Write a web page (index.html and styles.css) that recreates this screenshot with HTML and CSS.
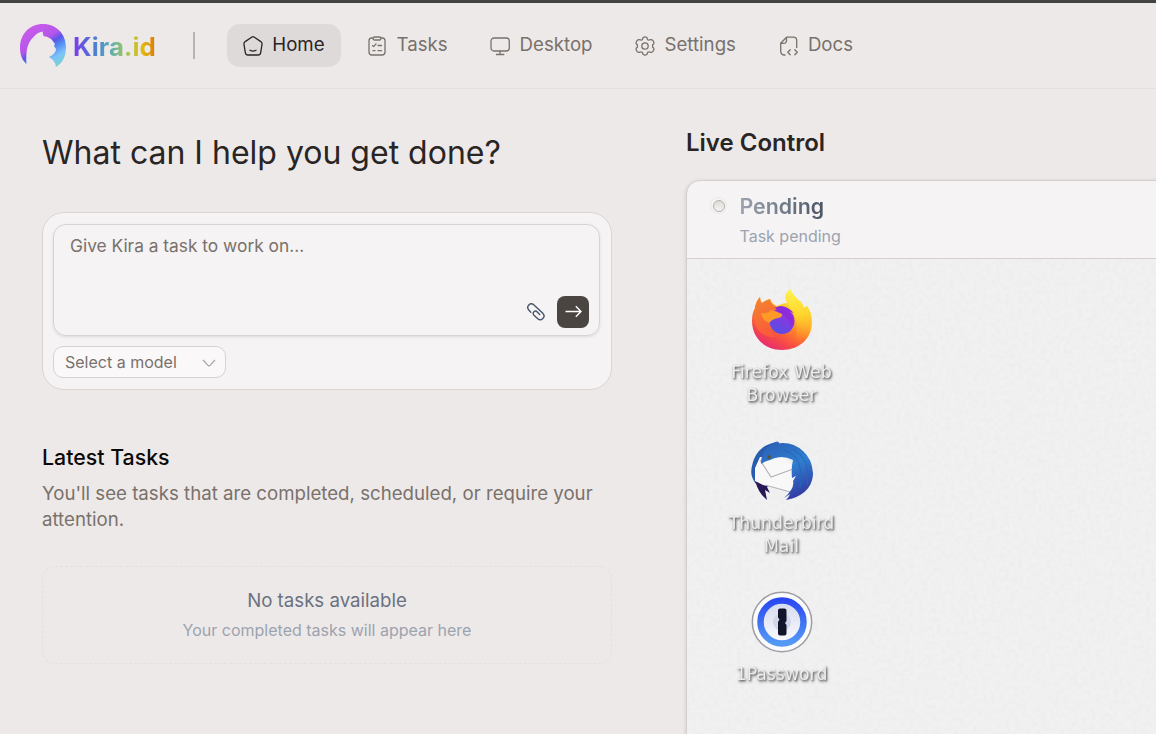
FILE: index.html
```html
<!DOCTYPE html>
<html lang="en">
<head>
<meta charset="utf-8">
<title>Kira.id</title>
<link rel="stylesheet" href="styles.css">
</head>
<body>
<header class="header">
  <div class="brand">
    <svg class="brand-mark" viewBox="0 0 46 44">
      <defs>
        <linearGradient id="mark" x1="0.25" y1="0.1" x2="0.85" y2="1">
          <stop offset="0" stop-color="#c75bea"/><stop offset=".34" stop-color="#b557ea"/>
          <stop offset=".47" stop-color="#5a56e8"/><stop offset=".6" stop-color="#548df3"/>
          <stop offset=".78" stop-color="#7cc2fa"/><stop offset="1" stop-color="#79d2cc"/>
        </linearGradient>
      </defs>
      <path fill="url(#mark)" d="M6.500 40C2 36 0 30.500 0 24C0 10 9.500 0 23 0C36.500 0 46 10 46 23.500C46 33 42 39.500 36 43C35.500 38 32.500 35 29 33C33 31.500 36 28 36 25L34 22L35 20C31 14 29 13 23.500 12L22.500 7.500C19 8 16 10 14 12.500C8 18 5.500 25 6.500 40Z"/>
    </svg>
    <span class="brand-name">Kira.id</span>
  </div>
  <div class="divider"></div>
  <nav class="nav">
    <a class="nav-item active">
      <svg class="icon" viewBox="0 0 20 20"><path d="M8.600 1.200Q10 .2 11.400 1.200L17.800 5.600Q19.300 6.700 19 8.400L17.700 16.600Q17.300 19 15 19H5Q2.700 19 2.300 16.600L1 8.400Q.7 6.700 2.200 5.600Z"/><path d="M7 14.200Q10 16 13 14.200"/></svg>
      <span>Home</span></a>
    <a class="nav-item">
      <svg class="icon" viewBox="0 0 20 20"><path d="M6 2H4.500Q2 2 2 4.500V16Q2 19 5 19H15Q18 19 18 16V4.500Q18 2 15.500 2H14"/><rect x="6" y="1" width="8" height="3" rx="1.500"/><path d="M5.500 9.600L6.600 10.600L9 7.800M11 9.500H14.500M6 14.700H8M11 14.700H14.500"/></svg>
      <span>Tasks</span></a>
    <a class="nav-item">
      <svg class="icon" viewBox="0 0 20 20"><rect x="1" y="2" width="18.300" height="13" rx="3"/><path d="M10 15V18.500M6.500 18.500H13.800"/></svg>
      <span>Desktop</span></a>
    <a class="nav-item">
      <svg class="icon" viewBox="0 0 20 20"><circle cx="10" cy="10" r="3.200"/><path d="M8 1.700Q10 .2 12 1.700L12.700 3.700Q13.700 4.400 15.500 3.700Q17 3.500 18 4.700L19 6.500Q19 8 17.600 8.900V11.100Q19 12 19 13.500L18 15.300Q17 16.500 15.500 16.300Q13.700 15.600 12.700 16.300L12 18.300Q10 19.800 8 18.300L7.300 16.300Q6.300 15.600 4.500 16.300Q3 16.500 2 15.300L1 13.500Q1 12 2.400 11.100V8.900Q1 8 1 6.500L2 4.700Q3 3.500 4.500 3.700Q6.300 4.400 7.300 3.700Z"/></svg>
      <span>Settings</span></a>
    <a class="nav-item">
      <svg class="icon" viewBox="0 0 20 20"><path d="M6 19H5Q1.700 18.500 1.700 15V7.300L7.500 1.200H14.500Q17.700 1.200 17.700 4.500V11.500M1.700 7.300H4.700Q7.500 7.300 7.500 4.500V1.200M11.200 13.700L8.800 16.200L11.200 18.700M15.800 13.700L18.300 16.200L15.800 18.700"/></svg>
      <span>Docs</span></a>
  </nav>
</header>
<main class="main">
  <section class="left">
    <h1 class="title">What can I help you get done?</h1>
    <div class="composer">
      <div class="prompt">
        <span class="placeholder">Give Kira a task to work on...</span>
        <div class="actions">
          <svg class="clip" viewBox="0 0 20 20"><path d="M4.800 10.200L3 8.200C-.5 4.500 4.300-.1 8 3L16.800 11.300C20.300 15 15.200 20 11.500 16.600L8 13.200C5.700 10.700 9 7.700 11.300 10L13.700 12.400"/></svg>
          <button class="send"><svg viewBox="0 0 20 20"><path d="M2.500 9.500H18M12.800 4.300L18 9.500L12.800 14.700"/></svg></button>
        </div>
      </div>
      <div class="select"><span>Select a model</span><svg viewBox="0 0 14 8"><path d="M1 1L5.700 6.200Q7 7.500 8.300 6.200L13 1"/></svg></div>
    </div>
    <h2 class="latest">Latest Tasks</h2>
    <p class="latest-text">You'll see tasks that are completed, scheduled, or require your attention.</p>
    <div class="empty">
      <div class="empty-title">No tasks available</div>
      <div class="empty-text">Your completed tasks will appear here</div>
    </div>
  </section>
  <section class="right">
    <h2 class="live">Live Control</h2>
    <div class="panel">
      <div class="status">
        <span class="dot"></span>
        <div><div class="status-title">Pending</div><div class="status-text">Task pending</div></div>
      </div>
      <div class="screen">
        <svg class="grain"><filter id="paper"><feTurbulence type="fractalNoise" baseFrequency=".22" numOctaves="3" seed="4"/><feColorMatrix values="0 0 0 0 .45  0 0 0 0 .45  0 0 0 0 .46  .14 0 0 0 -.05"/></filter><rect width="100%" height="100%" filter="url(#paper)"/></svg>
        <div class="apps">
          <div class="app">
            <svg class="app-icon" viewBox="0 0 62 62">
              <defs>
                <linearGradient id="fox" x1=".8" y1=".1" x2=".3" y2="1"><stop offset="0" stop-color="#fff044"/><stop offset=".3" stop-color="#ffc928"/><stop offset=".55" stop-color="#ff8029"/><stop offset=".8" stop-color="#f64749"/><stop offset="1" stop-color="#e62a75"/></linearGradient>
                <linearGradient id="globe" x1=".8" y1="0" x2=".3" y2="1"><stop offset="0" stop-color="#a62ade"/><stop offset="1" stop-color="#5350e5"/></linearGradient>
                <linearGradient id="flame" x1=".3" y1="0" x2=".4" y2="1"><stop offset="0" stop-color="#fff34c"/><stop offset=".5" stop-color="#ffd52d"/><stop offset="1" stop-color="#ff8a2b" stop-opacity="0"/></linearGradient>
                <linearGradient id="cheek" x1="0" y1="0" x2=".2" y2="1"><stop offset="0" stop-color="#f3862d"/><stop offset="1" stop-color="#fb5b3b"/></linearGradient>
              </defs>
              <path fill="url(#fox)" d="M4 19Q5 12 9 8Q9 12 11 14Q15 11 19 10Q21 15 26 17Q32 14 36 14Q32 6 39 0Q43 8 50 13Q52 16 53 19L56 17Q61 24 61 33C61 50 48 61 31 61C14 61 1 49 1 32Q1 24 4 19Z"/>
              <path fill="url(#flame)" d="M39 0Q43 8 50 13Q52 16 53 19L56 17Q61 24 60 34Q57 49 44 54Q49 34 40 20Q32 9 39 0Z"/>
              <path fill="url(#cheek)" d="M4 19Q5 12 9 8Q9 12 11 14Q15 11 19 10Q20 16 26 18L18 37Q20 44 24 48Q12 48 6 40Q1 30 4 19Z"/>
              <ellipse cx="31" cy="32" rx="12.500" ry="13" fill="url(#globe)"/>
              <path fill="#8c2bdc" d="M24 19Q32 13 43 24L37 22Q46 31 40 39Q38 26 29 24Z"/>
              <path fill="#ff9a28" d="M10 24Q16 25 20 21Q25 22 31 25Q32 28 27 29Q21 30 18 34Q11 31 10 24Z"/>
            </svg>
            <span class="app-name">Firefox Web<br>Browser</span>
          </div>
          <div class="app">
            <svg class="app-icon" viewBox="0 0 62 62">
              <defs><linearGradient id="bird" x1=".3" y1="0" x2=".7" y2="1"><stop offset="0" stop-color="#2c62b8"/><stop offset=".45" stop-color="#2f7fd0"/><stop offset="1" stop-color="#3336a0"/></linearGradient></defs>
              <path fill="#285cae" d="M5 44C-1 36 0 30 1 26C4 11 14 3 28 2L25 21L14 34Z"/>
              <path fill="#271754" d="M4 40Q12 42 19 45L16 47L19 53L14 50L16 60Q7 53 4 40Z"/>
              <path fill="#f8f8f9" d="M9 17L34 18L46 31L44 53L12 45L4 41V28Z"/>
              <path d="M9 20L20 37L45 28M14 45L43 53" fill="none" stroke="#b4b4b8" stroke-width="1.200"/>
              <path fill="url(#bird)" d="M10 24Q10 7 27 1L24 4Q40 0 52 11Q61 19 62 33C62 46 53 57 35 60Q38 57 39 54L33 58Q44 48 42 41L45 36L41 38Q40 28 42 20Q30 14 19 20Q14 21 10 24Z"/>
              <circle cx="18" cy="17" r="1.700" fill="#60501f"/>
              <path d="M32 10Q54 15 49 48M42 9Q61 20 56 45" fill="none" stroke="#2466b7" stroke-width="1"/>
            </svg>
            <span class="app-name">Thunderbird<br>Mail</span>
          </div>
          <div class="app">
            <svg class="app-icon" viewBox="0 0 62 62">
              <defs><linearGradient id="ring" x2="0" y2="1"><stop offset="0" stop-color="#2b49f2"/><stop offset="1" stop-color="#549af5"/></linearGradient><linearGradient id="face" x2="0" y2="1"><stop offset="0" stop-color="#d5d9ee"/><stop offset="1" stop-color="#fbfbff"/></linearGradient></defs>
              <circle cx="31" cy="31" r="29.700" fill="#fbfbfc" stroke="#9b9da4" stroke-width="1.500"/>
              <circle cx="31" cy="31" r="21.500" fill="url(#face)" stroke="url(#ring)" stroke-width="6.500"/>
              <circle cx="31" cy="31" r="9" fill="#d3d7ea"/>
              <path fill="#11162b" d="M29 17.500H33.500Q35.500 17.500 35.500 19.500V30L34 32L35.500 34V42.500Q35.500 44.500 33.500 44.500H29Q27 44.500 27 42.500V31L28.500 28.500L27 26.500V19.500Q27 17.500 29 17.500Z"/>
            </svg>
            <span class="app-name">1Password</span>
          </div>
        </div>
      </div>
    </div>
  </section>
</main>
</body>
</html>
```
FILE: styles.css
```css
* { box-sizing: border-box; }
body { margin: 0; height: 734px; overflow: hidden; background: #ede9e8; font-family: Inter, sans-serif; color: #292524; border-top: 3px solid #444343; }
h1, h2, p { margin: 0; }
svg { display: block; flex: none; }
.header { height: 86px; border-bottom: 1px solid #e5e1e0; display: flex; align-items: center; padding-left: 20px; }
.brand { display: flex; align-items: center; gap: 7px; width: 173px; }
.brand-mark { width: 46px; height: 44px; margin-top: 1px; }
.brand-name { font-size: 25.8px; line-height: 36px; font-weight: 650; margin-top: 3px; background: linear-gradient(90deg, #7c3aed, #4e7bd0 25%, #55a9bc 43%, #a9c952 66%, #e4b90e 84%, #d97706); background-clip: text; -webkit-background-clip: text; color: transparent; }
.divider { width: 2px; height: 27px; background: #bbb2b0; margin-right: 32px; }
.nav { display: flex; gap: 10.67px; }
.nav-item { height: 43px; padding: 0 16px; display: flex; align-items: center; gap: 9.3px; font-size: 18.67px; color: #78716c; border-radius: 13px; }
.nav-item span { position: relative; top: -1px; }
.nav-item.active { background: #dedad9; color: #292524; }
.icon { width: 20px; height: 20px; fill: none; stroke: currentColor; stroke-width: 1.3; stroke-linecap: round; stroke-linejoin: round; }
.main { display: flex; height: 645px; }
.left { width: 570px; margin-left: 42px; flex: none; }
.title { margin-top: 42px; font-size: 32px; line-height: 43px; font-weight: 400; white-space: nowrap; }
.composer { margin-top: 38px; height: 178px; padding: 11px 11px 10px 10px; border: 1px solid #dad5d3; border-radius: 22px; background: #f5f3f4; }
.prompt { height: 112px; border: 1px solid #d5d3d3; border-radius: 13px; box-shadow: 0 1px 3px #0000001c; padding: 9px 10px 7px 16px; display: flex; flex-direction: column; justify-content: space-between; }
.placeholder { font-size: 17.33px; line-height: 24px; color: #79716b; }
.actions { display: flex; align-items: center; justify-content: flex-end; gap: 11px; }
.clip { width: 20px; height: 20px; fill: none; stroke: #475569; stroke-width: 1.4; stroke-linecap: round; }
.send { width: 32px; height: 32px; padding: 6px; border: 0; border-radius: 8px; background: #4b4541; }
.send svg { width: 20px; height: 20px; fill: none; stroke: #fff; stroke-width: 1.4; }
.select { margin-top: 10px; width: 173px; height: 32px; border: 1px solid #d5d2d2; border-radius: 10px; background: #faf8f9; display: flex; align-items: center; justify-content: space-between; padding: 0 9px 0 11px; color: #79716b; font-size: 16px; }
.select svg { width: 14px; height: 8px; margin-top: 1px; fill: none; stroke: #aaa5a3; stroke-width: 1.2; }
.latest { margin-top: 53px; font-size: 21.33px; line-height: 28px; font-weight: 500; color: #0c0a09; }
.latest-text { margin-top: 10px; font-size: 18.67px; line-height: 26px; color: #79716b; }
.empty { margin-top: 33px; height: 98px; border: 1px dashed #e4e0de; border-radius: 13px; text-align: center; padding-top: 20px; }
.empty-title { font-size: 18.67px; line-height: 27px; color: #6b7280; }
.empty-text { margin-top: 5px; font-size: 16px; line-height: 22px; color: #9ca3af; }
.right { margin-left: 74px; flex: 1; }
.live { margin-top: 38px; font-size: 24px; line-height: 32px; font-weight: 600; }
.panel { margin-top: 21px; height: 570px; width: 500px; border: 1px solid #d3cfce; border-radius: 14px 0 0 0; overflow: hidden; background: #f5f3f4; box-shadow: 0 1px 4px #00000020; }
.status { height: 78px; border-bottom: 1px solid #d3cfce; display: flex; padding: 9px 0 0 23px; gap: 12.5px; }
.dot { width: 17px; height: 17px; margin-top: 7px; border-radius: 50%; border: 1px solid #ebe8e8; display: grid; place-items: center; }
.dot::after { content: ""; width: 10px; height: 10px; border-radius: 50%; border: 1px solid #b4b0ae; background: linear-gradient(#dedbd9, #f5f3f1); }
.status-title { font-size: 21.33px; line-height: 32px; font-weight: 600; width: max-content; background: linear-gradient(90deg, #9ca3af, #4b5563); background-clip: text; -webkit-background-clip: text; color: transparent; }
.status-text { margin-top: 2px; font-size: 16px; line-height: 24px; color: #9ca3af; }
.screen { position: relative; height: 491px; background: #f2f1f2; }
.grain { position: absolute; inset: 0; width: 100%; height: 100%; }
.apps { position: relative; padding: 30px 0 0 24px; width: 165px; }
.app { height: 151px; display: flex; flex-direction: column; align-items: center; }
.app-icon { width: 62px; height: 62px; filter: blur(.35px); }
.app-name { margin-top: 9.5px; font: 17.3px/23px "DejaVu Sans", sans-serif; text-align: center; color: #ededed; text-shadow: 1px 1px 2px #666, 1px 2px 3px #888; white-space: nowrap; filter: blur(.4px); }
```
